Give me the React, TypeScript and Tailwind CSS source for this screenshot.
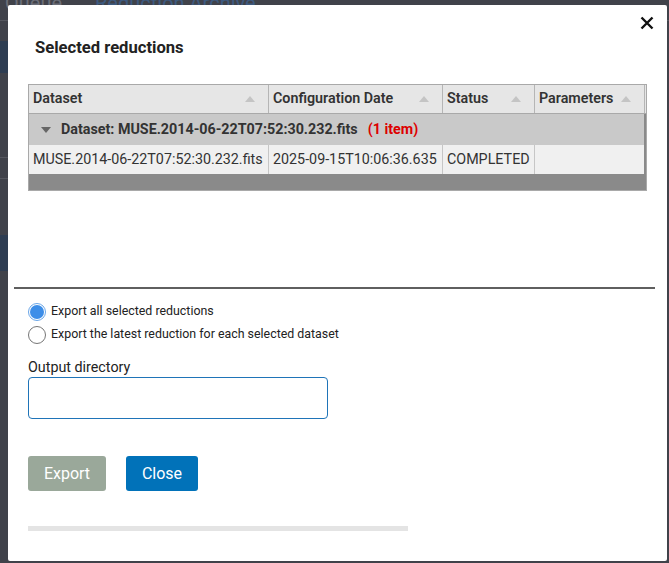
import React from "react";

const columns = [
  { label: "Dataset", width: "w-[240px]" },
  { label: "Configuration Date", width: "w-[174px]" },
  { label: "Status", width: "w-[92px]" },
  { label: "Parameters", width: "w-[110px]" },
];

const SortArrow = () => (
  <svg width="12" height="8" viewBox="0 0 12 8" className="shrink-0">
    <path d="M6 1 L11 7 L1 7 Z" fill="#c4c4c4" />
  </svg>
);

const App = () => {
  return (
    <div
      className="relative w-[669px] h-[563px] overflow-hidden bg-[#40424a]"
      style={{ fontFamily: "Roboto, 'Liberation Sans', sans-serif" }}
    >
      {/* Page behind the overlay */}
      <div className="flex gap-[33px] pl-[5px] -mt-[12px] text-[20px] text-[#6b6e78]">
        <span>Queue</span>
        <span className="text-[#3d5a80]">Reduction Archive</span>
      </div>
      <div className="h-[1px] bg-[#55575f] mt-[2px]" />
      <div className="w-[8px] h-[32px] bg-[#2e3d52] mt-[20px]" />
      <div className="w-[8px] h-[1px] bg-[#55575f] mt-[84px]" />
      <div className="w-[8px] h-[1px] bg-[#55575f] mt-[20px]" />
      <div className="w-[8px] h-[36px] bg-[#2e3d52] mt-[56px]" />

      {/* Modal */}
      <div className="absolute left-[8px] top-[5px] w-[659px] h-[556px] bg-white rounded-[2px]">
        <button className="absolute right-[10px] top-[8px] w-[20px] h-[20px] flex items-center justify-center">
          <svg width="14" height="14" viewBox="0 0 14 14">
            <path d="M1.5 1.5 L12.5 12.5 M12.5 1.5 L1.5 12.5" stroke="#111" strokeWidth="2.4" />
          </svg>
        </button>

        <h2 className="pl-[27px] pt-[33px] text-[16.6px] font-bold text-[#222] leading-[20px]">
          Selected reductions
        </h2>

        {/* Grid */}
        <div className="ml-[20px] mt-[26px] w-[619px] border border-[#a9a9a9] bg-[#8a8a8a] text-[14.3px] text-[#333]">
          <div className="flex h-[29px] bg-[#e6e6e6] border-b border-[#a9a9a9]">
            {columns.map((c) => (
              <div
                key={c.label}
                className={`${c.width} flex items-center justify-between pl-[4px] pr-[12px] border-r border-[#b5b5b5] font-semibold text-[#333]`}
              >
                <span>{c.label}</span>
                <SortArrow />
              </div>
            ))}
            <div className="flex-1" />
          </div>

          <div className="flex items-center h-[31px] bg-[#c9c9c9] pl-[11px] font-bold text-[#333] mr-[2px]">
            <svg width="12" height="8" viewBox="0 0 12 8" className="mr-[9px]">
              <path d="M1 1 L11 1 L6 7 Z" fill="#666" />
            </svg>
            <span>Dataset: MUSE.2014-06-22T07:52:30.232.fits</span>
            <span className="ml-[10px] text-[#dd0000]">(1 item)</span>
          </div>

          <div className="flex h-[29px] bg-[#f0f0f0] mr-[2px]">
            <div className="w-[240px] flex items-center pl-[4px] border-r border-[#c6c6c6]">
              MUSE.2014-06-22T07:52:30.232.fits
            </div>
            <div className="w-[174px] flex items-center pl-[4px] border-r border-[#c6c6c6]">
              2025-09-15T10:06:36.635
            </div>
            <div className="w-[92px] flex items-center pl-[4px] border-r border-[#c6c6c6]">
              COMPLETED
            </div>
            <div className="flex-1" />
          </div>

          <div className="h-[16px]" />
        </div>

        <div className="ml-[6px] mr-[12px] mt-[96px] h-[2px] bg-[#5f5f5f]" />

        {/* Options */}
        <div className="pl-[20px] pt-[11px] text-[12.4px] text-[#222]">
          <label className="flex items-center h-[23px]">
            <span className="w-[18px] h-[18px] rounded-full border border-[#6aa6e8] bg-white flex items-center justify-center mr-[5px]">
              <span className="w-[14px] h-[14px] rounded-full bg-[#3d8ee8]" />
            </span>
            Export all selected reductions
          </label>
          <label className="flex items-center h-[23px]">
            <span className="w-[18px] h-[18px] rounded-full border border-[#767676] bg-white mr-[5px]" />
            Export the latest reduction for each selected dataset
          </label>

          <div className="mt-[13px] text-[14.3px] text-[#222] leading-[16px]">Output directory</div>
          <input
            className="mt-[2px] w-[300px] h-[42px] rounded-[4px] border border-[#1f74b8] outline-none"
            type="text"
          />

          <div className="flex gap-[20px] mt-[37px]">
            <button className="w-[78px] h-[35px] rounded-[3px] bg-[#9aa89a] text-white text-[16px]">
              Export
            </button>
            <button className="w-[72px] h-[35px] rounded-[3px] bg-[#0172b9] text-white text-[16px]">
              Close
            </button>
          </div>

          <div className="mt-[35px] w-[380px] h-[5px] bg-[#e4e4e4]" />
        </div>
      </div>
    </div>
  );
};

export default App;
